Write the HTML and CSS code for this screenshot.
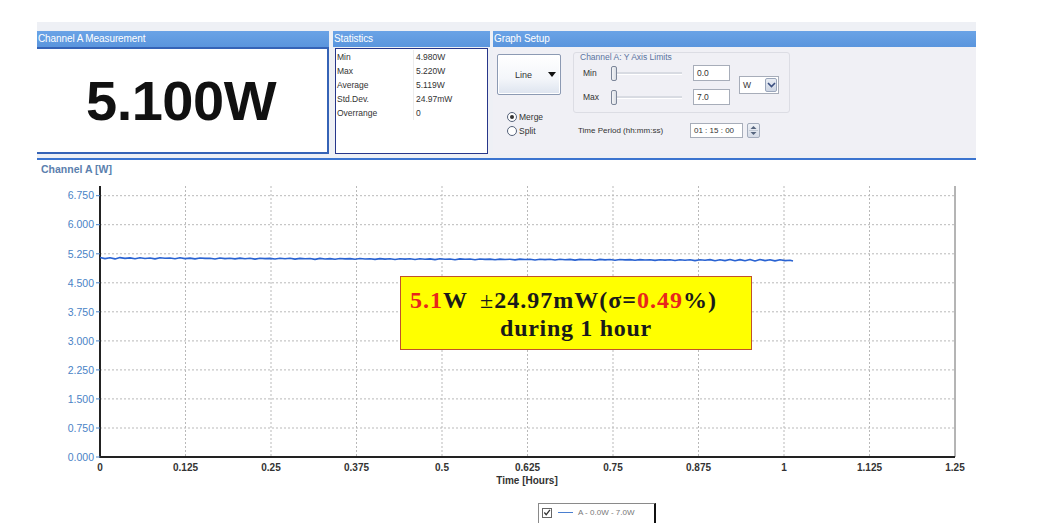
FILE: index.html
```html
<!DOCTYPE html>
<html>
<head>
<meta charset="utf-8">
<link rel="stylesheet" href="styles.css">
</head>
<body>
<div class="top">
  <section class="panel p-meas">
    <div class="ph">Channel A Measurement</div>
    <div class="meas-body"><span class="big">5.100W</span></div>
  </section>
  <section class="panel p-stats">
    <div class="ph">Statistics</div>
    <div class="stats-body">
      <div class="stats-table">
        <div class="srow"><span>Min</span><span>4.980W</span></div>
        <div class="srow"><span>Max</span><span>5.220W</span></div>
        <div class="srow"><span>Average</span><span>5.119W</span></div>
        <div class="srow"><span>Std.Dev.</span><span>24.97mW</span></div>
        <div class="srow"><span>Overrange</span><span>0</span></div>
      </div>
    </div>
  </section>
  <section class="panel p-setup">
    <div class="ph">Graph Setup</div>
    <div class="setup-body">
      <div class="col-left">
        <div class="btn-line"><span>Line</span><span class="tri"></span></div>
        <div class="radios">
          <div class="radio"><span class="rc on"></span>Merge</div>
          <div class="radio"><span class="rc"></span>Split</div>
        </div>
      </div>
      <div class="col-right">
        <div class="group">
          <div class="gtitle">Channel A: Y Axis Limits</div>
          <div class="gbody">
            <div class="limits">
              <div class="lrow"><span class="lbl">Min</span><div class="slider"><span class="thumb"></span></div><span class="inp">0.0</span></div>
              <div class="lrow"><span class="lbl">Max</span><div class="slider"><span class="thumb"></span></div><span class="inp">7.0</span></div>
            </div>
            <div class="sel"><span class="selval">W</span><span class="selbtn"><svg width="9" height="6" viewBox="0 0 9 6"><path d="M1 1 L4.5 4.5 L8 1" fill="none" stroke="#3a4f80" stroke-width="1.6"/></svg></span></div>
          </div>
        </div>
        <div class="time-row">
          <span class="tlabel">Time Period (hh:mm:ss)</span>
          <span class="tinp">01 : 15 : 00</span>
          <span class="spin"><svg width="13" height="15" viewBox="0 0 13 15"><path d="M3.5 6 L6.5 3 L9.5 6 Z" fill="#56657e"/><path d="M3.5 9 L6.5 12 L9.5 9 Z" fill="#56657e"/><line x1="2" y1="7.5" x2="11" y2="7.5" stroke="#b8c0cc" stroke-width="0.8"/></svg></span>
        </div>
      </div>
    </div>
  </section>
</div>

<div class="chart">
  <div class="chart-title">Channel A [W]</div>
  <svg class="plot" width="1038" height="320" viewBox="0 0 1038 320">
    <g stroke="#b9b9b9" stroke-width="1" stroke-dasharray="2 2">
      <line x1="100" y1="19.7" x2="955" y2="19.7"/>
      <line x1="100" y1="48.7" x2="955" y2="48.7"/>
      <line x1="100" y1="77.8" x2="955" y2="77.8"/>
      <line x1="100" y1="106.8" x2="955" y2="106.8"/>
      <line x1="100" y1="135.8" x2="955" y2="135.8"/>
      <line x1="100" y1="164.9" x2="955" y2="164.9"/>
      <line x1="100" y1="193.9" x2="955" y2="193.9"/>
      <line x1="100" y1="222.9" x2="955" y2="222.9"/>
      <line x1="100" y1="252" x2="955" y2="252"/>
      <line x1="185.5" y1="10" x2="185.5" y2="281"/>
      <line x1="271" y1="10" x2="271" y2="281"/>
      <line x1="356.5" y1="10" x2="356.5" y2="281"/>
      <line x1="442" y1="10" x2="442" y2="281"/>
      <line x1="527.5" y1="10" x2="527.5" y2="281"/>
      <line x1="613" y1="10" x2="613" y2="281"/>
      <line x1="698.5" y1="10" x2="698.5" y2="281"/>
      <line x1="784" y1="10" x2="784" y2="281"/>
      <line x1="869.5" y1="10" x2="869.5" y2="281"/>
    </g>
    <line x1="955" y1="10" x2="955" y2="281" stroke="#6a6a6a" stroke-width="1"/>
    <line x1="100" y1="10" x2="100" y2="282" stroke="#222" stroke-width="2"/>
    <line x1="99" y1="281" x2="955" y2="281" stroke="#222" stroke-width="2"/>
    <g stroke="#4b84c6" stroke-width="1">
      <line x1="96" y1="19.7" x2="100" y2="19.7"/>
      <line x1="96" y1="48.7" x2="100" y2="48.7"/>
      <line x1="96" y1="77.8" x2="100" y2="77.8"/>
      <line x1="96" y1="106.8" x2="100" y2="106.8"/>
      <line x1="96" y1="135.8" x2="100" y2="135.8"/>
      <line x1="96" y1="164.9" x2="100" y2="164.9"/>
      <line x1="96" y1="193.9" x2="100" y2="193.9"/>
      <line x1="96" y1="222.9" x2="100" y2="222.9"/>
      <line x1="96" y1="252" x2="100" y2="252"/>
      <line x1="96" y1="281" x2="100" y2="281"/>
    </g>
    <g class="ylab" text-anchor="end">
      <text x="94" y="22.5">6.750</text>
      <text x="94" y="51.5">6.000</text>
      <text x="94" y="81.5">5.250</text>
      <text x="94" y="110.5">4.500</text>
      <text x="94" y="139.5">3.750</text>
      <text x="94" y="168.5">3.000</text>
      <text x="94" y="197.5">2.250</text>
      <text x="94" y="226.5">1.500</text>
      <text x="94" y="255.5">0.750</text>
      <text x="94" y="284.5">0.000</text>
    </g>
    <g class="xlab" text-anchor="middle">
      <text x="100" y="295">0</text>
      <text x="185.5" y="295">0.125</text>
      <text x="271" y="295">0.25</text>
      <text x="356.5" y="295">0.375</text>
      <text x="442" y="295">0.5</text>
      <text x="527.5" y="295">0.625</text>
      <text x="613" y="295">0.75</text>
      <text x="698.5" y="295">0.875</text>
      <text x="784" y="295">1</text>
      <text x="869.5" y="295">1.125</text>
      <text x="955" y="295">1.25</text>
    </g>
    <text class="xtitle" x="527" y="308" text-anchor="middle">Time [Hours]</text>
    <polyline fill="none" stroke="#2a63d2" stroke-width="1.6" stroke-linejoin="round" points="100,81.5 105,82.6 110,81.8 115,82.9 120,81.6 125,82.4 130,81.9 135,82.8 140,81.7 145,82.5 150,82.0 155,82.9 160,81.8 165,82.3 170,82.0 175,82.7 180,81.8 185,82.6 190,82.1 195,82.9 200,82.0 205,82.4 210,82.2 215,83.0 220,82.0 225,82.6 230,82.2 235,82.9 240,82.1 245,82.7 250,82.3 255,83.1 260,82.2 265,82.6 270,82.4 275,83.0 280,82.2 285,82.8 290,82.3 295,83.1 300,82.4 305,82.7 310,82.5 315,83.4 320,82.4 325,83.0 330,82.6 335,83.2 340,82.5 345,82.9 350,82.6 355,83.3 360,82.5 365,83.0 370,82.7 375,83.4 380,82.6 385,83.1 390,82.7 395,83.5 400,82.7 405,83.1 410,82.8 415,83.5 420,82.8 425,83.2 430,82.9 435,83.6 440,82.8 445,83.3 450,83.0 455,83.7 460,82.9 465,83.3 470,83.0 475,83.7 480,83.0 485,83.4 490,83.1 495,83.8 500,83.1 505,83.5 510,83.2 515,83.9 520,83.1 525,83.5 530,83.3 535,84.0 540,83.2 545,83.6 550,83.3 555,84.0 560,83.3 565,83.7 570,83.4 575,84.1 580,83.4 585,83.8 590,83.5 595,84.2 600,83.4 605,83.9 610,83.5 615,84.3 620,83.5 625,83.9 630,83.6 635,84.3 640,83.6 645,84.0 650,83.7 655,84.4 660,83.7 665,84.1 670,83.7 675,84.5 680,83.8 685,84.2 690,83.8 695,84.6 700,83.8 705,84.3 710,83.6 715,84.7 720,83.7 725,84.6 730,83.5 735,84.8 740,83.6 745,84.7 750,83.4 755,84.9 760,83.5 765,84.6 770,83.7 775,84.9 780,83.8 785,84.6 790,84.2 793,85.0"/>
  </svg>
  <div class="note">
    <div class="note-l1"><span class="red">5.1</span>W<span class="pm">±</span>24.97mW(σ=<span class="red">0.49</span>%)</div>
    <div class="note-l2">during 1 hour</div>
  </div>
  <div class="legend">
    <span class="cb"><svg width="9" height="9" viewBox="0 0 9 9"><path d="M1.5 4.5 L3.6 7 L7.8 1.5" fill="none" stroke="#333" stroke-width="1.4"/></svg></span>
    <span class="lline"></span>
    <span class="ltext">A - 0.0W - 7.0W</span>
  </div>
</div>
</body>
</html>
```

FILE: styles.css
```css
* { box-sizing: border-box; }
html, body { margin: 0; padding: 0; background: #ffffff; }
body {
  width: 1038px;
  height: 531px;
  overflow: hidden;
  font-family: "Liberation Sans", Arial, sans-serif;
  color: #222;
}

/* ---------- top panels ---------- */
.top {
  margin: 22px 0 0 37px;
  width: 939px;
  display: flex;
  background: #eef0f5;
  padding-top: 9px;
  padding-bottom: 4px;
  border-bottom: 2px solid #3b74cf;
}
.panel { display: flex; flex-direction: column; }
.p-meas { width: 292px; margin-right: 4px; }
.p-stats { width: 157px; margin-right: 3px; }
.p-setup { width: 483px; }
.ph {
  height: 16px;
  line-height: 16px;
  background: linear-gradient(#6aa3e6, #5a95dd);
  color: #fff;
  font-size: 10px;
  padding-left: 1px;
  white-space: nowrap;
  letter-spacing: -0.1px;
}
.meas-body {
  height: 107px;
  background: #fff;
  border-top: 2px solid #3563b6;
  border-right: 2px solid #3563b6;
  border-bottom: 2px solid #3563b6;
  display: flex;
  align-items: center;
  justify-content: center;
}
.big {
  font-family: "Liberation Sans", Arial, sans-serif;
  font-weight: bold;
  font-size: 56px;
  color: #111;
  letter-spacing: -0.5px;
  margin-left: -2px;
}

.stats-body {
  height: 107px;
  padding: 1px 2px 0 2px;
  background: #eef0f5;
}
.stats-table {
  height: 106px;
  background: #fff;
  border: 1.5px solid #27368a;
  padding-top: 1px;
}
.srow {
  display: flex;
  height: 14px;
  line-height: 14px;
  font-size: 8.5px;
  color: #333;
}
.srow span:first-child {
  width: 78px;
  padding-left: 1px;
  border-right: 1px solid #ececec;
}
.srow span:last-child { padding-left: 2px; }

/* ---------- graph setup ---------- */
.setup-body {
  height: 107px;
  background: #f0f0f5;
  display: flex;
  font-size: 8px;
  color: #333;
}
.col-left { width: 80px; padding-left: 4px; }
.btn-line {
  margin-top: 7px;
  width: 64px;
  height: 41px;
  border: 1px solid #8c9ab3;
  border-radius: 2px;
  background: linear-gradient(#ffffff, #f4f6fa 60%, #dde4ef);
  box-shadow: inset 0 0 0 1px #fff;
  display: flex;
  align-items: center;
  padding-left: 17px;
  font-size: 9px;
}
.tri {
  margin-left: 16px;
  width: 0; height: 0;
  border-left: 4px solid transparent;
  border-right: 4px solid transparent;
  border-top: 5px solid #111;
}
.radios { margin-top: 15px; padding-left: 10px; }
.radio {
  height: 14px;
  display: flex;
  align-items: center;
  font-size: 8.5px;
}
.rc {
  width: 10px; height: 10px;
  border: 1px solid #55627a;
  border-radius: 50%;
  background: #fff;
  margin-right: 2px;
  display: flex; align-items: center; justify-content: center;
}
.rc.on::after {
  content: "";
  width: 4px; height: 4px;
  border-radius: 50%;
  background: #333;
}
.col-right { width: 230px; }
.group {
  margin-top: 5px;
  width: 217px;
  height: 61px;
  border: 1px solid #dcdde4;
  border-radius: 3px;
}
.gtitle {
  font-size: 8.5px;
  color: #5a73a0;
  padding-left: 6px;
  line-height: 9px;
}
.gbody { display: flex; align-items: center; margin-top: 3px; }
.limits { display: flex; flex-direction: column; gap: 8px; padding-left: 9px; }
.lrow { display: flex; align-items: center; height: 16px; }
.lbl { width: 28px; font-size: 8.5px; }
.slider {
  position: relative;
  width: 71px;
  height: 16px;
  display: flex;
  align-items: center;
}
.slider::before {
  content: "";
  position: absolute;
  left: 2px; right: 0; top: 7px;
  height: 2px;
  background: #d8dbe2;
  border-bottom: 1px solid #fff;
}
.thumb {
  position: relative;
  width: 6px; height: 15px;
  border: 1px solid #7c8699;
  border-radius: 2px;
  background: linear-gradient(90deg, #f4f5f7, #d9dde4);
}
.inp {
  margin-left: 11px;
  width: 37px;
  height: 16px;
  background: #fff;
  border: 1px solid #a7adb9;
  font-size: 8.5px;
  line-height: 14px;
  padding-left: 3px;
}
.sel {
  margin-left: 9px;
  width: 40px;
  height: 18px;
  background: #fff;
  border: 1px solid #a7adb9;
  display: flex;
  align-items: center;
  justify-content: space-between;
  padding: 1px;
}
.selval { padding-left: 2px; font-size: 8.5px; }
.selbtn {
  width: 12px; height: 14px;
  background: linear-gradient(#e9edf4, #cdd5e3);
  border: 1px solid #9aa6bb;
  border-radius: 2px;
  display: flex; align-items: center; justify-content: center;
}
.time-row {
  margin-top: 10px;
  display: flex;
  align-items: center;
  height: 15px;
  padding-left: 5px;
}
.tlabel { width: 112px; font-size: 8px; white-space: nowrap; }
.tinp {
  width: 53px;
  height: 15px;
  background: #fff;
  border: 1px solid #a7adb9;
  font-size: 8px;
  line-height: 13px;
  padding-left: 3px;
  white-space: nowrap;
}
.spin {
  margin-left: 4px;
  width: 13px; height: 15px;
  background: linear-gradient(#eef1f6, #d6dce7);
  border: 1px solid #a3acbc;
  border-radius: 2px;
  display: flex;
}
.spin svg { margin: -1px; }

/* ---------- chart ---------- */
.chart { position: relative; }
.chart-title {
  margin-top: 3px;
  height: 13px;
  line-height: 13px;
  padding-left: 41px;
  font-size: 10.5px;
  font-weight: bold;
  color: #5b80ae;
}
.plot { display: block; }
.ylab text {
  font-family: "Liberation Sans", Arial, sans-serif;
  font-size: 10.5px;
  fill: #4a83c6;
}
.xlab text {
  font-family: "Liberation Sans", Arial, sans-serif;
  font-size: 10px;
  font-weight: bold;
  fill: #333;
}
.xtitle {
  font-family: "Liberation Sans", Arial, sans-serif;
  font-size: 10px;
  font-weight: bold;
  fill: #333;
}
.note {
  position: absolute;
  left: 400px;
  top: 113px;
  width: 352px;
  height: 74px;
  background: #ffff00;
  border: 1px solid #c0522a;
  font-family: "Liberation Serif", "Times New Roman", serif;
  font-weight: bold;
  font-size: 24px;
  color: #1a1a1a;
  padding-top: 9px;
}
.note-l1 {
  padding-left: 9px;
  line-height: 28px;
  letter-spacing: 1px;
  white-space: nowrap;
}
.note-l2 {
  text-align: center;
  line-height: 29px;
  letter-spacing: 0.7px;
}
.red { color: #e8261c; }
.pm { margin-left: 12px; font-weight: normal; }
.legend {
  margin: 7px 0 0 538px;
  width: 118px;
  height: 20px;
  border: 1px solid #8a8a8a;
  border-right: 2px solid #111;
  border-bottom: none;
  display: flex;
  align-items: center;
  padding-left: 3px;
  padding-bottom: 2px;
}
.cb {
  width: 10px; height: 10px;
  border: 1px solid #666;
  display: flex; align-items: center; justify-content: center;
  background: #fff;
}
.lline {
  margin-left: 6px;
  width: 15px;
  height: 1.5px;
  background: #4a7fd0;
}
.ltext {
  margin-left: 5px;
  font-size: 8px;
  color: #777;
}
```
